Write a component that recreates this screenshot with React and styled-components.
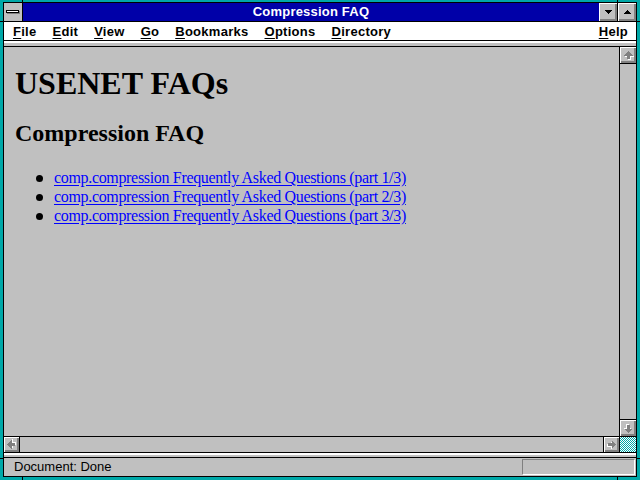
import React from "react";
import styled, { createGlobalStyle } from "styled-components";

const GlobalStyle = createGlobalStyle`
  html, body {
    margin: 0;
    padding: 0;
    background: #00a8a8;
  }
  body {
    width: 640px;
    height: 480px;
    overflow: hidden;
    font-family: "Liberation Sans", Arial, sans-serif;
  }
`;

const links = [
  "comp.compression Frequently Asked Questions (part 1/3)",
  "comp.compression Frequently Asked Questions (part 2/3)",
  "comp.compression Frequently Asked Questions (part 3/3)",
];

const menus = ["File", "Edit", "View", "Go", "Bookmarks", "Options", "Directory"];

// little black marks in the sizing frame
const ticks = [
  { left: 22, top: 0, w: 1, h: 2 },
  { left: 617, top: 0, w: 1, h: 2 },
  { left: 22, top: 477, w: 1, h: 3 },
  { left: 617, top: 477, w: 1, h: 3 },
  { left: 0, top: 21, w: 3, h: 1 },
  { left: 0, top: 458, w: 3, h: 1 },
  { left: 637, top: 21, w: 3, h: 1 },
  { left: 637, top: 458, w: 3, h: 1 },
];

const Arrow = ({ dir }) => {
  const rot = { up: 0, right: 90, down: 180, left: 270 }[dir];
  return (
    <svg width="15" height="15" viewBox="0 0 15 15" shapeRendering="crispEdges">
      <g transform={`rotate(${rot} 7.5 7.5)`}>
        <polygon points="7.5,3 12,7.5 9,7.5 9,11 6,11 6,7.5 3,7.5" fill="#fff" transform="translate(1 1)" />
        <polygon points="7.5,3 12,7.5 9,7.5 9,11 6,11 6,7.5 3,7.5" fill="#808080" />
      </g>
    </svg>
  );
};

const Caret = ({ up }) => (
  <svg width="7" height="4" viewBox="0 0 7 4" shapeRendering="crispEdges">
    <polygon points={up ? "3.5,0 7,4 0,4" : "0,0 7,0 3.5,4"} fill="#000" />
  </svg>
);

const App = () => {
  return (
    <Frame>
      <GlobalStyle />
      {ticks.map((t, i) => (
        <Tick key={i} $left={t.left} $top={t.top} $w={t.w} $h={t.h} />
      ))}
      <Inner>
        <TitleBar>
          <SysBox>
            <SysBar />
          </SysBox>
          <Title>Compression FAQ</Title>
          <CapButton $divider>
            <Caret />
          </CapButton>
          <CapButton>
            <Caret up />
          </CapButton>
        </TitleBar>
        <MenuBar>
          {menus.map((m) => (
            <MenuItem key={m}>
              <u>{m[0]}</u>
              {m.slice(1)}
            </MenuItem>
          ))}
          <MenuItem $right>
            <u>H</u>elp
          </MenuItem>
        </MenuBar>
        <Strip />
        <MainRow>
          <Content>
            <H1>USENET FAQs</H1>
            <H2>Compression FAQ</H2>
            <List>
              {links.map((l) => (
                <Item key={l}>
                  <Link href="#">{l}</Link>
                </Item>
              ))}
            </List>
          </Content>
          <VScroll>
            <ScrollBtn $h={16} $sepBottom>
              <Arrow dir="up" />
            </ScrollBtn>
            <Track />
            <ScrollBtn $h={16} $sepTop>
              <Arrow dir="down" />
            </ScrollBtn>
          </VScroll>
        </MainRow>
        <HScroll>
          <ScrollBtn $w={15} $sepRight>
            <Arrow dir="left" />
          </ScrollBtn>
          <Track />
          <ScrollBtn $w={15} $sepLeft $sepRight>
            <Arrow dir="right" />
          </ScrollBtn>
          <Corner />
        </HScroll>
        <Strip $bottom />
        <StatusBar>
          <StatusText>Document: Done</StatusText>
          <StatusBox />
        </StatusBar>
      </Inner>
    </Frame>
  );
};

const Frame = styled.div`
  position: relative;
  box-sizing: border-box;
  width: 640px;
  height: 480px;
  padding: 2px 3px 3px 3px;
  background: #00a8a8;
`;

const Tick = styled.div`
  position: absolute;
  left: ${(p) => p.$left}px;
  top: ${(p) => p.$top}px;
  width: ${(p) => p.$w}px;
  height: ${(p) => p.$h}px;
  background: #000;
`;

const Inner = styled.div`
  box-sizing: border-box;
  height: 100%;
  border: 1px solid #000;
  display: flex;
  flex-direction: column;
  background: #c0c0c0;
`;

const TitleBar = styled.div`
  display: flex;
  height: 18px;
  border-bottom: 1px solid #000;
  flex-shrink: 0;
`;

const SysBox = styled.div`
  width: 18px;
  border-right: 1px solid #000;
  background: #c0c0c0;
  display: flex;
  align-items: center;
  justify-content: center;
`;

const SysBar = styled.span`
  display: block;
  width: 11px;
  height: 1px;
  margin: 0 1px 1px 0;
  background: #fff;
  border: 1px solid #000;
  box-shadow: 1px 1px 0 #808080;
`;

const Title = styled.div`
  flex: 1;
  background: #0000a8;
  color: #fff;
  font-weight: bold;
  font-size: 13px;
  letter-spacing: 0.2px;
  line-height: 18px;
  text-align: center;
`;

const CapButton = styled.div`
  width: 18px;
  background: #c0c0c0;
  display: flex;
  align-items: center;
  justify-content: center;
  box-shadow: inset 1px 1px #fff, inset -1px -1px #808080, inset -2px -2px #808080;
  border-right: ${(p) => (p.$divider ? "1px solid #000" : "none")};
`;

const MenuBar = styled.div`
  display: flex;
  height: 18px;
  padding-left: 1px;
  background: #fff;
  border-bottom: 1px solid #000;
  flex-shrink: 0;
`;

const MenuItem = styled.div`
  padding: 0 8px;
  margin-left: ${(p) => (p.$right ? "auto" : "0")};
  font-size: 13px;
  font-weight: bold;
  letter-spacing: 0.27px;
  line-height: 19px;
  color: #000;
  u {
    text-underline-offset: 2px;
  }
`;

const Strip = styled.div`
  flex-shrink: 0;
  height: ${(p) => (p.$bottom ? "2px" : "3px")};
  background: #c0c0c0;
  border-top: 2px solid #fff;
  border-bottom: 1px solid #000;
`;

const MainRow = styled.div`
  flex: 1;
  display: flex;
  min-height: 0;
`;

const Content = styled.div`
  flex: 1;
  border-right: 1px solid #000;
  padding: 20px 0 0 11px;
  font-family: "Liberation Serif", "Times New Roman", serif;
  color: #000;
`;

const H1 = styled.h1`
  margin: 0;
  font-size: 32px;
  line-height: 1;
  font-weight: bold;
`;

const H2 = styled.h2`
  margin: 22px 0 0;
  font-size: 24px;
  line-height: 1;
  font-weight: bold;
`;

const List = styled.ul`
  margin: 23px 0 0;
  padding: 0 0 0 21px;
  list-style: none;
`;

const Item = styled.li`
  display: flex;
  font-size: 16px;
  letter-spacing: -0.33px;
  line-height: 19px;
  &::before {
    content: "";
    flex-shrink: 0;
    width: 7px;
    height: 7px;
    margin: 7px 11px 0 0;
    border-radius: 50%;
    background: #000;
  }
`;

const Link = styled.a`
  color: #0000ff;
  text-decoration: underline;
  text-underline-offset: 2px;
`;

const VScroll = styled.div`
  width: 16px;
  display: flex;
  flex-direction: column;
`;

const HScroll = styled.div`
  flex-shrink: 0;
  height: 15px;
  display: flex;
  border-top: 1px solid #000;
  border-bottom: 1px solid #000;
`;

const ScrollBtn = styled.div`
  flex-shrink: 0;
  ${(p) => (p.$w ? `width: ${p.$w}px;` : "")}
  ${(p) => (p.$h ? `height: ${p.$h}px;` : "")}
  background: #c0c0c0;
  display: flex;
  align-items: center;
  justify-content: center;
  box-shadow: inset 1px 1px #fff, inset -1px -1px #808080, inset -2px -2px #808080;
  border-top: ${(p) => (p.$sepTop ? "1px solid #000" : "none")};
  border-bottom: ${(p) => (p.$sepBottom ? "1px solid #000" : "none")};
  border-left: ${(p) => (p.$sepLeft ? "1px solid #000" : "none")};
  border-right: ${(p) => (p.$sepRight ? "1px solid #000" : "none")};
`;

const Track = styled.div`
  flex: 1;
  background: #c0c0c0;
`;

const Corner = styled.div`
  width: 16px;
  background-color: #fff;
  background-image: conic-gradient(#00a8a8 25%, #fff 0 50%, #00a8a8 0 75%, #fff 0);
  background-size: 2px 2px;
`;

const StatusBar = styled.div`
  flex-shrink: 0;
  height: 18px;
  display: flex;
  align-items: flex-start;
  background: #c0c0c0;
`;

const StatusText = styled.div`
  flex: 1;
  padding-left: 10px;
  font-size: 13px;
  line-height: 18px;
  color: #000;
`;

const StatusBox = styled.div`
  box-sizing: border-box;
  width: 113px;
  height: 16px;
  margin: 1px 1px 0 0;
  border-top: 1px solid #808080;
  border-left: 1px solid #808080;
  border-bottom: 1px solid #fff;
  border-right: 1px solid #fff;
`;

export default App;
